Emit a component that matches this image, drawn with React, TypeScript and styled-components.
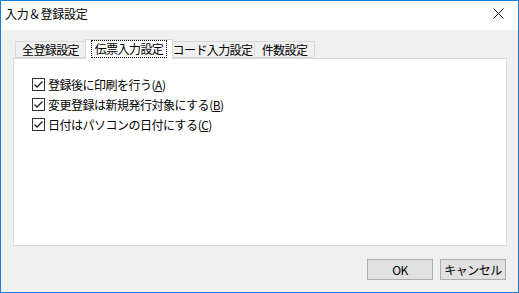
import React from "react";
import styled, { createGlobalStyle } from "styled-components";

const GlobalStyle = createGlobalStyle`
	html, body {
		margin: 0;
		padding: 0;
		background: #ffffff;
	}
	body {
		font-family: "Noto Sans CJK JP", "Noto Sans", sans-serif;
		font-size: 12px;
		color: #000;
	}
`;

const Window = styled.div`
	box-sizing: border-box;
	width: 519px;
	height: 293px;
	border: 1px solid #1a7fd4;
	display: flex;
	flex-direction: column;
	background: #f0f0f0;
`;

const TitleBar = styled.div`
	height: 29px;
	background: #ffffff;
	display: flex;
	align-items: center;
	justify-content: space-between;
	padding: 0 0 4px 4px;
	box-sizing: border-box;
	flex-shrink: 0;
`;

const Title = styled.span`
	font-size: 12px;
	letter-spacing: -0.2px;
`;

const CloseButton = styled.div`
	width: 46px;
	height: 24px;
	display: flex;
	align-items: center;
	justify-content: center;
	margin-right: -1px;
	padding-left: 4px;
	box-sizing: border-box;
`;

const Body = styled.div`
	flex: 1;
	display: flex;
	flex-direction: column;
	padding: 9px 11px 0 12px;
`;

const TabRow = styled.div`
	display: flex;
	align-items: flex-end;
	height: 19px;
	padding-left: 2px;
`;

const Tab = styled.div<{ $w: number; $active?: boolean }>`
	box-sizing: border-box;
	width: ${(p) => p.$w}px;
	height: ${(p) => (p.$active ? 20 : 17)}px;
	margin: ${(p) => (p.$active ? "0 -2px 0 -2px" : "0")};
	position: relative;
	z-index: ${(p) => (p.$active ? 2 : 1)};
	background: ${(p) => (p.$active ? "#ffffff" : "#f0f0f0")};
	border: 1px solid #d9d9d9;
	border-bottom: ${(p) => (p.$active ? "none" : "1px solid #d9d9d9")};
	margin-bottom: ${(p) => (p.$active ? "-1px" : "0")};
	display: flex;
	align-items: center;
	justify-content: center;
	white-space: nowrap;
	font-size: 12px;
	letter-spacing: -0.6px;
	padding-bottom: ${(p) => (p.$active ? 1 : 0)}px;
	& + & {
		margin-left: ${(p) => (p.$active ? -2 : -1)}px;
	}
`;

const FocusText = styled.span`
	outline: 1px dotted #000;
	outline-offset: 1px;
	padding: 0 2px;
	line-height: 14px;
`;

const Panel = styled.div`
	box-sizing: border-box;
	width: 494px;
	height: 188px;
	background: #ffffff;
	border: 1px solid #d9d9d9;
	display: flex;
	flex-direction: column;
	padding: 15px 0 0 18px;
`;

const CheckRow = styled.label`
	display: flex;
	align-items: center;
	height: 20px;
	gap: 3px;
	font-size: 12px;
	letter-spacing: -0.5px;
`;

const Box = styled.span`
	box-sizing: border-box;
	width: 13px;
	height: 13px;
	border: 1px solid #333333;
	background: #ffffff;
	display: flex;
	align-items: center;
	justify-content: center;
	flex-shrink: 0;
`;

const Mnemonic = styled.span`
	text-decoration: underline;
	text-underline-offset: 1px;
`;

const ButtonRow = styled.div`
	display: flex;
	justify-content: flex-end;
	gap: 7px;
	margin-top: 13px;
	padding-right: 1px;
`;

const Button = styled.div`
	box-sizing: border-box;
	width: 66px;
	height: 21px;
	background: #e1e1e1;
	border: 1px solid #adadad;
	display: flex;
	align-items: center;
	justify-content: center;
	font-size: 12px;
	letter-spacing: -0.5px;
`;

const Check = () => (
	<svg width="11" height="11" viewBox="0 0 11 11">
		<path d="M1.5 5.5 L4 8 L9.5 2.5" fill="none" stroke="#222" strokeWidth="1.3" />
	</svg>
);

const items = [
	{ label: "登録後に印刷を行う", key: "A" },
	{ label: "変更登録は新規発行対象にする", key: "B" },
	{ label: "日付はパソコンの日付にする", key: "C" }
];

const tabs = [
	{ label: "全登録設定", w: 71 },
	{ label: "伝票入力設定", w: 88, active: true },
	{ label: "コード入力設定", w: 85 },
	{ label: "件数設定", w: 61 }
];

const App = () => {
	return (
		<>
			<GlobalStyle />
			<Window>
				<TitleBar>
					<Title>入力＆登録設定</Title>
					<CloseButton>
						<svg width="11" height="11" viewBox="0 0 11 11">
							<path d="M0.5 0.5 L10.5 10.5 M10.5 0.5 L0.5 10.5" stroke="#111" strokeWidth="1" />
						</svg>
					</CloseButton>
				</TitleBar>
				<Body>
					<TabRow>
						{tabs.map((t) => (
							<Tab key={t.label} $w={t.w} $active={t.active}>
								{t.active ? <FocusText>{t.label}</FocusText> : t.label}
							</Tab>
						))}
					</TabRow>
					<Panel>
						{items.map((it) => (
							<CheckRow key={it.key}>
								<Box>
									<Check />
								</Box>
								<span>
									{it.label}(<Mnemonic>{it.key}</Mnemonic>)
								</span>
							</CheckRow>
						))}
					</Panel>
					<ButtonRow>
						<Button>OK</Button>
						<Button>キャンセル</Button>
					</ButtonRow>
				</Body>
			</Window>
		</>
	);
};

export default App;
